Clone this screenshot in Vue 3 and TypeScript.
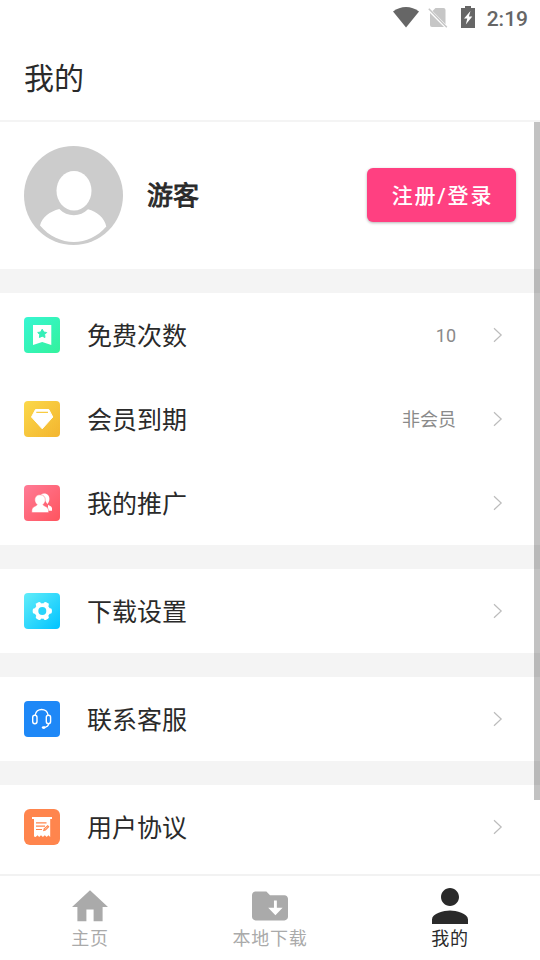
<script setup lang="ts">
interface MenuItem {
  icon: 'ticket' | 'vip' | 'people' | 'gear' | 'service' | 'terms'
  label: string
  value?: string
}

interface Tab {
  icon: 'home' | 'folder' | 'user'
  label: string
  active?: boolean
}

const groups: MenuItem[][] = [
  [
    { icon: 'ticket', label: '免费次数', value: '10' },
    { icon: 'vip', label: '会员到期', value: '非会员' },
    { icon: 'people', label: '我的推广' },
  ],
  [{ icon: 'gear', label: '下载设置' }],
  [{ icon: 'service', label: '联系客服' }],
  [{ icon: 'terms', label: '用户协议' }],
]

const tabs: Tab[] = [
  { icon: 'home', label: '主页' },
  { icon: 'folder', label: '本地下载' },
  { icon: 'user', label: '我的', active: true },
]
</script>

<template>
  <div class="screen">
    <div class="status">
      <svg class="wifi" viewBox="0 0 26 21" width="26" height="21">
        <path d="M0 4.600C7.500-1.500 18.500-1.500 26 4.600L13 20.600Z" fill="#666" />
      </svg>
      <svg class="sim" viewBox="0 0 20 21" width="20" height="21">
        <path d="M7.500 1H15.500Q17.500 1 17.500 3V17.200L4.500 4Z" fill="#c6c6c6" />
        <path d="M2 6L16 20H4Q2 20 2 18Z" fill="#c6c6c6" />
        <path d="M.8 1.800L18.800 20.200" stroke="#c6c6c6" stroke-width="1.500" />
      </svg>
      <svg class="battery" viewBox="0 0 14 22" width="14" height="22">
        <path d="M4 0H10V2H14V22H0V2H4Z" fill="#666" />
        <path d="M9.500 5L3 12.500H6.300L4.800 18.500L11.300 10.500H7.900Z" fill="#fff" />
      </svg>
      <span class="clock">2:19</span>
    </div>

    <header class="header">我的</header>

    <main class="content">
      <section class="profile">
        <svg class="avatar" viewBox="0 0 99 99" width="99" height="99">
          <circle cx="49.500" cy="49.500" r="49.500" fill="#ccc" />
          <ellipse cx="50" cy="44.700" rx="17.500" ry="19.700" fill="#fff" />
          <path d="M16 79.500C18 71 26 65.500 35.300 63C43 71.300 56.500 71.300 64 63.300C73 65.500 80.500 72 82.300 80.500C65 101.200 34 101.200 16 79.500Z" fill="#fff" />
        </svg>
        <span class="name">游客</span>
        <button class="login" type="button">注册/登录</button>
      </section>

      <section v-for="(group, i) in groups" :key="i" class="group">
        <div v-for="item in group" :key="item.label" class="row">
          <span class="badge" :class="item.icon">
            <svg viewBox="0 0 36 36" width="36" height="36">
              <template v-if="item.icon === 'ticket'">
                <path d="M9 8H27.300V28L18.200 25L9 28Z" fill="#fff" />
                <path d="M18.200 12.200L19.700 15L22.700 15.500L20.600 17.600L21 20.500L18.200 19.200L15.400 20.500L15.800 17.600L13.700 15.500L16.700 15Z" fill="#35efb8" stroke="#35efb8" stroke-linejoin="round" />
              </template>
              <template v-else-if="item.icon === 'vip'">
                <path d="M11.500 8.500H24.800L28.800 16L18.200 27.800L7.500 16Z" fill="#fff" stroke="#fff" stroke-linejoin="round" />
                <path d="M12.300 11.400H24" stroke="#f8cb42" stroke-width="1.200" />
              </template>
              <template v-else-if="item.icon === 'people'">
                <path d="M17 9.500C20 7.300 25.600 8.800 25.400 14C25.300 16.500 24.300 18 23.300 19C24 20.700 28 20.500 28 23.500V25.800H24V20Z" fill="#fff" />
                <path d="M16 9.700C19.600 9.700 21.500 12 21.300 15.200C21.200 17 20.200 18.600 19 19.600C19.300 21.300 24.600 21.500 24.600 25.500V27.600H7.800V25.500C7.800 21.500 12.800 21.300 13.100 19.600C11.900 18.600 10.900 17 10.800 15.200C10.600 12 12.500 9.700 16 9.700Z" fill="#fff" stroke="#ff6679" stroke-width=".5" />
              </template>
              <template v-else-if="item.icon === 'gear'">
                <g transform="translate(18.300 18)" fill="#fff">
                  <circle r="7.800" />
                  <rect v-for="a in [0, 60, 120]" :key="a" x="-9.600" y="-2.700" width="19.200" height="5.400" rx="1.700" :transform="`rotate(${a})`" />
                  <circle r="4" fill="#2ad4fb" />
                </g>
              </template>
              <template v-else-if="item.icon === 'service'">
                <g fill="none" stroke="#fff" stroke-width="1.400" stroke-linecap="round">
                  <rect x="8.700" y="14.300" width="4.300" height="8.400" rx="2.150" />
                  <rect x="22.300" y="14.300" width="4.300" height="8.400" rx="2.150" />
                  <path d="M11.200 14.200C12 6.500 23.300 6.500 24.100 14.200" />
                  <path d="M24.600 22.800C24.400 25 22.600 26.200 20 26.500" />
                </g>
                <ellipse cx="19.700" cy="26.600" rx="1.900" ry="1.400" fill="#fff" />
              </template>
              <template v-else>
                <path d="M8 8H28V10H26.200V28L24.400 26.300L22.700 28L20.800 26.300L18.900 28L17 26.300L15.200 28L13.500 26.300L11.700 28L10 27.500V10H8Z" fill="#fff" />
                <path d="M12 13.800H22.500M12 17.200H21M12 20.500H18" stroke="#ff854d" stroke-width="1.200" />
                <path d="M19 22.200L19.800 19.500L23.700 16L25.400 17.800L21.700 21.500Z" fill="#ff854d" />
                <path d="M20.800 20.400L23.500 17.900" stroke="#fff" stroke-width=".6" />
              </template>
            </svg>
          </span>
          <span class="label">{{ item.label }}</span>
          <span class="value">{{ item.value }}</span>
          <svg class="arrow" viewBox="0 0 10 16" width="10" height="16">
            <path d="M1 1.200L8.200 8L1 14.800" fill="none" stroke="#bcbcbc" stroke-width="1.200" />
          </svg>
        </div>
      </section>
      <div class="scrollbar"></div>
    </main>

    <nav class="tabs">
      <div v-for="tab in tabs" :key="tab.label" class="tab" :class="{ active: tab.active }">
        <svg v-if="tab.icon === 'home'" viewBox="2 2 20 20" width="36" height="36">
          <path d="M10 20.500V14H14V20.500H19V12.500H22L12 3.300L2 12.500H5V20.500Z" fill="currentColor" />
        </svg>
        <svg v-else-if="tab.icon === 'folder'" viewBox="2 2 20 20" width="36" height="36">
          <path d="M10 4H4C2.900 4 2 4.900 2 6V18C2 19.100 2.900 20 4 20H20C21.100 20 22 19.100 22 18V8C22 6.900 21.100 6 20 6H12Z" fill="currentColor" />
          <path d="M14.200 9H15.800V13H19L15 17.200L11 13H14.200Z" fill="#fff" />
        </svg>
        <svg v-else viewBox="4 4 16 16" width="36" height="36">
          <path d="M12 12C14.200 12 16 10.200 16 8S14.200 4 12 4S8 5.800 8 8S9.800 12 12 12ZM12 14C9.300 14 4 15.300 4 18V20H20V18C20 15.300 14.700 14 12 14Z" fill="currentColor" />
        </svg>
        <span class="tab-label">{{ tab.label }}</span>
      </div>
    </nav>
  </div>
</template>

<style>
body {
  margin: 0;
}
</style>

<style scoped>
.screen {
  display: flex;
  flex-direction: column;
  width: 540px;
  height: 960px;
  overflow: hidden;
  background: #fff;
  color: #2a2a2a;
  font-family: Roboto, "Noto Sans CJK SC", sans-serif;
}

.status {
  display: flex;
  flex: none;
  justify-content: flex-end;
  box-sizing: border-box;
  height: 36px;
  padding: 6px 12px 0 0;
}

.wifi {
  margin: 1px 9px 0 0;
}

.sim {
  margin: 1px 13px 0 0;
}

.battery {
  margin-right: 12px;
}

.clock {
  padding-top: 1px;
  color: #666;
  font-size: 21px;
  font-weight: 500;
  line-height: 25px;
}

.header {
  flex: none;
  box-sizing: border-box;
  height: 86px;
  padding: 2px 0 0 24px;
  border-bottom: 2px solid #f4f4f4;
  font-size: 30px;
  line-height: 82px;
}

.content {
  position: relative;
  flex: 1;
  min-height: 0;
  overflow: hidden;
}

.profile {
  display: flex;
  align-items: center;
  box-sizing: border-box;
  height: 147px;
  padding: 0 24px;
}

.name {
  flex: 1;
  margin-left: 24px;
  font-size: 26px;
  -webkit-text-stroke: 0.9px currentColor;
  line-height: 36px;
}

.login {
  width: 149px;
  height: 54px;
  margin-bottom: 1px;
  padding: 2px 0 0 2px;
  border: 0;
  border-radius: 6px;
  background: #ff4081;
  box-shadow: 0 1px 3px rgba(0, 0, 0, 0.3);
  color: #fff;
  font-family: inherit;
  font-size: 21px;
  font-weight: 500;
  letter-spacing: 1.9px;
  line-height: 52px;
}

.group {
  border-top: 24px solid #f4f4f4;
}

.row {
  display: flex;
  align-items: center;
  box-sizing: border-box;
  height: 84px;
  padding: 0 37px 0 24px;
}

.badge {
  width: 36px;
  height: 36px;
  overflow: hidden;
  border-radius: 4px;
}

.badge svg {
  display: block;
}

.ticket {
  background: linear-gradient(135deg, #37f6d3, #33f29c);
}

.vip {
  background: linear-gradient(135deg, #fbd84a, #f3b52f);
}

.people {
  background: linear-gradient(135deg, #ff7b96, #ff545e);
}

.gear {
  background: linear-gradient(135deg, #62edf9, #00c3ff);
}

.service {
  background: #1e88f7;
}

.terms {
  border-radius: 6px;
  background: #ff854d;
}

.label {
  margin-left: 27px;
  padding-top: 4px;
  font-size: 25px;
  line-height: 36px;
}

.value {
  flex: 1;
  padding-top: 2px;
  color: #8a8a8a;
  font-size: 18px;
  line-height: 26px;
  text-align: right;
}

.arrow {
  margin-left: 37px;
}

.scrollbar {
  position: absolute;
  top: 0;
  right: 0;
  width: 6px;
  height: 678px;
  background: rgba(0, 0, 0, 0.24);
}

.tabs {
  display: flex;
  flex: none;
  height: 84px;
  border-top: 2px solid #f2f2f2;
}

.tab {
  display: flex;
  flex: 1;
  flex-direction: column;
  align-items: center;
  padding-top: 12px;
  color: #aaa;
}

.active {
  color: #2a2a2a;
}

.tab-label {
  margin-top: 2px;
  font-size: 18px;
  letter-spacing: 0.7px;
  line-height: 26px;
}
</style>
